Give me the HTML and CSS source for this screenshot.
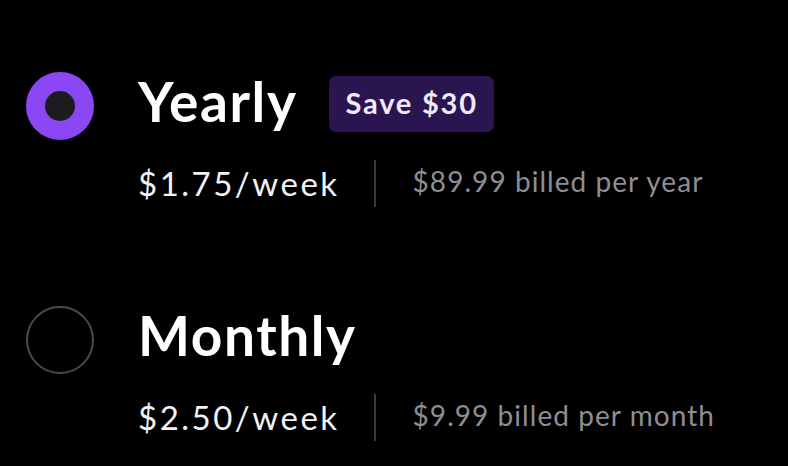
FILE: index.html
```html
<!DOCTYPE html>
<html>
<head>
<meta charset="utf-8">
<link rel="stylesheet" href="styles.css">
</head>
<body>
<div class="plans">
  <div class="plan">
    <div class="radio radio-selected"></div>
    <div class="info">
      <div class="title-row">
        <span class="title">Yearly</span>
        <span class="badge">Save $30</span>
      </div>
      <div class="sub-row">
        <span class="price">$1.75/week</span>
        <span class="divider"></span>
        <span class="billed">$89.99 billed per year</span>
      </div>
    </div>
  </div>
  <div class="plan plan-second">
    <div class="radio"></div>
    <div class="info">
      <div class="title-row">
        <span class="title">Monthly</span>
      </div>
      <div class="sub-row">
        <span class="price">$2.50/week</span>
        <span class="divider"></span>
        <span class="billed">$9.99 billed per month</span>
      </div>
    </div>
  </div>
</div>
</body>
</html>
```
FILE: styles.css
```css
html, body {
  margin: 0;
  padding: 0;
  background: #000;
}
body {
  font-family: Lato, "Noto Sans", sans-serif;
  width: 788px;
  height: 466px;
  overflow: hidden;
}
.plans {
  padding: 72px 0 0 26px;
  display: flex;
  flex-direction: column;
}
.plan {
  display: flex;
  align-items: flex-start;
}
.plan-second {
  margin-top: 99px;
}
.radio {
  flex: none;
  width: 68px;
  height: 68px;
  border-radius: 50%;
  box-sizing: border-box;
  border: 2px solid #4a4a4e;
}
.radio-selected {
  border: 19.5px solid #8b47f4;
  background: #1c1c1e;
}
.info {
  margin-left: 44px;
  margin-top: 4px;
  display: flex;
  flex-direction: column;
}
.title-row {
  display: flex;
  align-items: center;
  height: 56px;
  gap: 31px;
}
.title {
  color: #fff;
  font-weight: 700;
  font-size: 55px;
  line-height: 56px;
  letter-spacing: 1.6px;
  margin-bottom: 7px;
}
.badge {
  height: 56px;
  box-sizing: border-box;
  padding: 0 16px 4px 17px;
  display: flex;
  align-items: center;
  background: #2a1550;
  border-radius: 7px;
  color: #efe9fa;
  font-weight: 700;
  font-size: 29px;
  letter-spacing: 1.8px;
}
.sub-row {
  margin-top: 28px;
  display: flex;
  align-items: center;
  height: 47px;
}
.price {
  color: #f2f2f6;
  font-size: 33px;
  line-height: 40px;
  letter-spacing: 2.5px;
  margin-bottom: 2px;
}
.divider {
  width: 2px;
  height: 47px;
  background: #3a3a3d;
  margin: 0 37px 0 34px;
}
.billed {
  color: #8e8e93;
  font-size: 28px;
  line-height: 32px;
  letter-spacing: 1.05px;
  margin-bottom: 5px;
}
```
